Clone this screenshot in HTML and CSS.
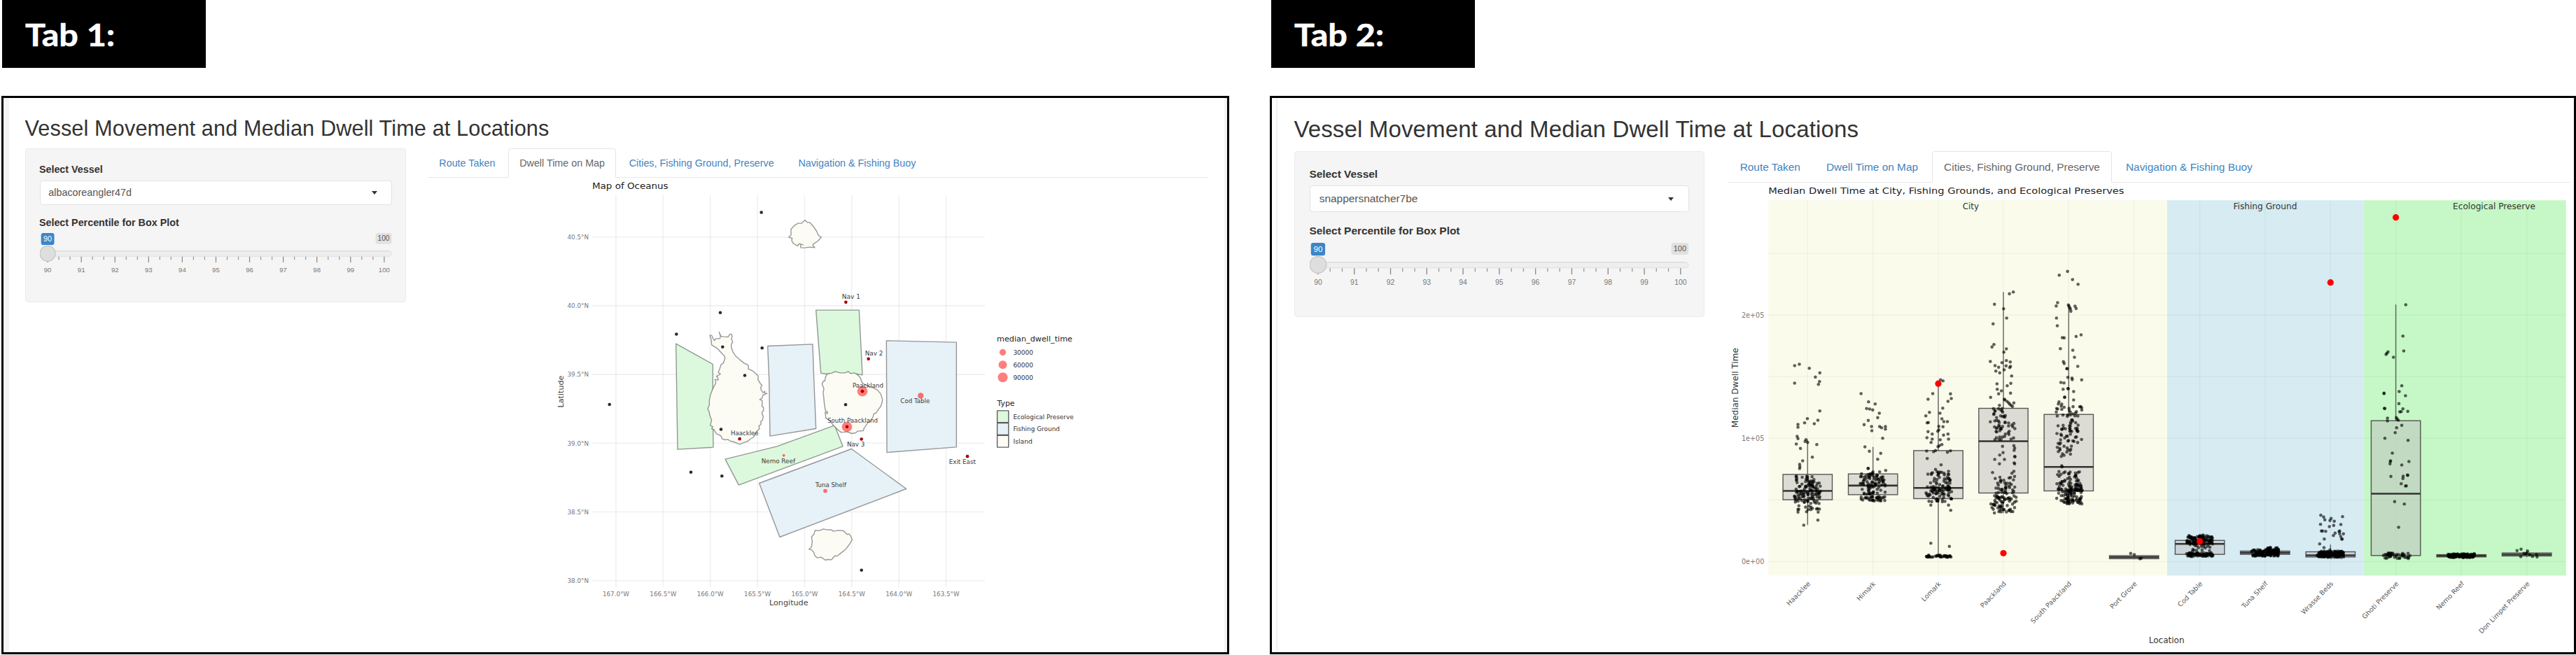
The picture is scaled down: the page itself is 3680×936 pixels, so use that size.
FILE: index.html
```html
<!DOCTYPE html>
<html lang="en">
<head>
<meta charset="utf-8">
<title>Vessel Movement and Median Dwell Time at Locations</title>
<link rel="stylesheet" href="styles.css">
</head>
<body>
<section class="column column-map">
  <h1 class="caption"><span>Tab 1:</span></h1>
  <div class="panel panel-map">
    <h2 class="title">Vessel Movement and Median Dwell Time at Locations</h2>
    <div class="layout">
      <aside class="well">
        <label class="label">Select Vessel</label>
        <div class="select"><span>albacoreangler47d</span><i class="caret"></i></div>
        <label class="label">Select Percentile for Box Plot</label>
        <svg class="slider" viewBox="0 0 491.5 62"></svg>
      </aside>
      <main class="main">
        <nav class="tabs">
          <a class="tab">Route Taken</a><a class="tab active">Dwell Time on Map</a><a class="tab">Cities, Fishing Ground, Preserve</a><a class="tab">Navigation &amp; Fishing Buoy</a>
        </nav>
        <svg class="chart" id="map" viewBox="611 253.5 1114 640" width="1114" height="640"></svg>
      </main>
    </div>
  </div>
</section>
<section class="column column-box">
  <h1 class="caption"><span>Tab 2:</span></h1>
  <div class="panel panel-box">
    <h2 class="title">Vessel Movement and Median Dwell Time at Locations</h2>
    <div class="layout">
      <aside class="well">
        <label class="label">Select Vessel</label>
        <div class="select"><span>snappersnatcher7be</span><i class="caret"></i></div>
        <label class="label">Select Percentile for Box Plot</label>
        <svg class="slider" viewBox="0 0 491.5 62"></svg>
      </aside>
      <main class="main">
        <nav class="tabs">
          <a class="tab">Route Taken</a><a class="tab">Dwell Time on Map</a><a class="tab active">Cities, Fishing Ground, Preserve</a><a class="tab">Navigation &amp; Fishing Buoy</a>
        </nav>
        <svg class="chart" id="boxplot" viewBox="2468 260.8 1204 665" width="1204" height="665"></svg>
      </main>
    </div>
  </div>
</section>
<script src="charts.js"></script>
</body>
</html>
```
FILE: styles.css
```css
* { box-sizing: border-box; }
body {
  margin: 0;
  width: 3680px;
  height: 936px;
  overflow: hidden;
  background: #fff;
  display: flex;
  font-family: "Liberation Sans", Arial, sans-serif;
  color: #333;
}
.column { display: flex; flex-direction: column; }
.column-map { width: 1754px; margin-left: 2px; margin-right: 58px; }
.column-box { width: 1866px; }
.caption {
  margin: 0 0 40px 1px;
  width: 291px;
  height: 97px;
  background: #000;
  color: #fff;
  padding-left: 33px;
  font: bold 44.5px/97px Lato, sans-serif;
}
.column-box .caption { margin-left: 2px; }
.caption span { display: inline-block; transform-origin: 0 50%; transform: scaleX(1.09); -webkit-text-stroke: .6px #fff; }
.panel {
  height: 798px;
  border: 3px solid #000;
}
.panel-map {
  font-size: 14.33px;
  padding: 26.5px 28px 0 31.4px;
  box-shadow: inset 8px 0 #f4f4f4, inset -4px 0 #f4f4f4;
}
.panel-box {
  font-size: 15.43px;
  padding: 27px 5px 0 32.4px;
  box-shadow: inset 6px 0 #fff, inset 8px 0 #f1f1f1;
}
.title {
  margin: 0 0 .37em -1px;
  font-size: 2.143em;
  font-weight: 400;
  line-height: 1.1;
  letter-spacing: .0035em;
  white-space: nowrap;
}
.layout { display: flex; align-items: flex-start; }
.well {
  flex: none;
  width: 37.95em;
  height: 15.36em;
  margin-right: 2.15em;
  padding: 1.36em;
  background: #f5f5f5;
  border: 1.5px solid #ebebeb;
  border-radius: .29em;
}
.label {
  display: block;
  font-weight: 700;
  line-height: 1.4286;
  margin-left: -1px;
  margin-bottom: .357em;
}
.select {
  display: flex;
  align-items: center;
  justify-content: space-between;
  height: 2.48em;
  margin-bottom: 1.02em;
  padding: 0 1.35em 0 .8em;
  background: #fff;
  border: 1.5px solid #e2e2e2;
  border-radius: .29em;
  color: #555;
}
.caret {
  border: .31em solid transparent;
  border-top: .36em solid #333;
  border-bottom: 0;
}
.slider { display: block; width: 100%; font-family: "Liberation Sans", Arial, sans-serif; }
.main { flex: 1; }
.tabs {
  display: flex;
  height: 2.94em;
  border-bottom: 1.5px solid #e8e8e8;
}
.tab {
  height: 2.94em;
  padding: .75em 1.07em 0;
  margin-right: 2px;
  line-height: 1.4286;
  border: 1.5px solid transparent;
  color: #4384bf;
  white-space: nowrap;
}
.tab.active {
  color: #666;
  background: #fff;
  border-color: #e4e4e4;
  border-bottom-color: #fff;
  border-radius: .29em .29em 0 0;
}
.chart { display: block; font-family: "DejaVu Sans", sans-serif; }
.grid { stroke: #000; stroke-opacity: .06; stroke-width: 1.6; }
.area { stroke: #555; stroke-opacity: .6; stroke-width: 1.4; stroke-linejoin: round; vector-effect: non-scaling-stroke; }
.preserve { fill: #ddf9dd; }
.ground { fill: #e6f2f8; }
.island { fill: #fcfcf5; }
.bubble { fill: #f00; fill-opacity: .5; }
.port { fill: #a80000; }
.buoy { fill: #2b2b2b; }
.box { fill: #bebebe; fill-opacity: .5; stroke: #333; stroke-opacity: .8; stroke-width: 1.4; }
.whisker { stroke: #333; stroke-opacity: .7; stroke-width: 1.5; }
.median { stroke: #333; stroke-width: 2.6; }
.point { fill: #000; fill-opacity: .62; }
.outlier { fill: #f00; }
```
FILE: charts.js
```javascript
const NS = 'http://www.w3.org/2000/svg';

function add(parent, tag, attrs, text) {
  const node = document.createElementNS(NS, tag);
  for (const key in attrs) node.setAttribute(key, attrs[key]);
  if (text !== undefined) node.textContent = text;
  parent.appendChild(node);
  return node;
}

// Text spanning x1..x2 on the given baseline.
function span(svg, text, x1, x2, y, size, fill) {
  return add(svg, 'text', { x: x1, y, 'font-size': size, fill, textLength: x2 - x1, lengthAdjust: 'spacingAndGlyphs' }, text);
}
function line(svg, cls, x1, y1, x2, y2) {
  add(svg, 'line', { class: cls, x1, y1, x2, y2 });
}
function dot(svg, cls, cx, cy, r) {
  add(svg, 'circle', { class: cls, cx, cy, r });
}

// Percentile sliders
document.querySelectorAll('.slider').forEach(svg => {
  add(svg, 'rect', { x: .5, y: 25, width: 490.5, height: 7.5, rx: 4, fill: '#eee', stroke: '#e0e0e0', 'stroke-width': 1 });
  line(svg, '', 4, 25.4, 488, 25.4);
  svg.lastChild.setAttribute('stroke', '#dcdcdc');
  for (let i = 0; i <= 30; i++) {
    const x = 10.8 + i * 47 / 3;
    const major = i % 3 === 0;
    add(svg, 'line', { x1: x, x2: x, y1: 33, y2: major ? 41 : 37.5, stroke: major ? '#888' : '#999', 'stroke-width': 1.2 });
    if (major) add(svg, 'text', { x, y: 54.3, 'font-size': 9.4, fill: '#777', 'text-anchor': 'middle' }, 90 + i / 3);
  }
  add(svg, 'circle', { cx: 10.8, cy: 28.6, r: 10.8, fill: '#dedede', stroke: '#c2c2c2' });
  add(svg, 'rect', { x: 1.6, y: 0, width: 18.4, height: 16.6, rx: 3, fill: '#3b86c8' });
  add(svg, 'text', { x: 10.8, y: 11.6, 'font-size': 10.5, fill: '#fff', 'text-anchor': 'middle' }, '90');
  add(svg, 'rect', { x: 468.8, y: 0, width: 22.4, height: 15.4, rx: 3, fill: '#e1e1e1' });
  add(svg, 'text', { x: 480, y: 11.2, 'font-size': 10, fill: '#555', 'text-anchor': 'middle' }, '100');
});

// Map of Oceanus
const map = document.getElementById('map');
span(map, 'Map of Oceanus', 846, 954.6, 269.3, 12.6, '#222');
['167.0', '166.5', '166.0', '165.5', '165.0', '164.5', '164.0', '163.5'].forEach((t, i) => {
  const x = 880 + i * 67.36;
  line(map, 'grid', x, 278, x, 839);
  span(map, t + '°W', x - 19, x + 19, 851.5, 8.9, '#777');
});
['40.5', '40.0', '39.5', '39.0', '38.5', '38.0'].forEach((t, i) => {
  const y = 338.2 + i * 98.2;
  line(map, 'grid', 846, y, 1407, y);
  span(map, t + '°N', 810.5, 841, y + 3.3, 8.9, '#777');
});
span(map, 'Longitude', 1099, 1154.6, 864.8, 11, '#444');
add(map, 'text', { x: 0, y: 0, transform: 'translate(805 559) rotate(-90)', 'font-size': 11, fill: '#444', 'text-anchor': 'middle', textLength: 46, lengthAdjust: 'spacingAndGlyphs' }, 'Latitude');

const southern = add(map, 'g', { transform: 'translate(780 640) scale(.35714 .33333)' });
const central = add(map, 'g', { transform: 'translate(900 400) scale(.33333)' });
const northern = add(map, 'g', { transform: 'translate(780 240) scale(.33333)' });
function area(g, type, points) { add(g, 'polygon', { class: 'area ' + type, points }); }
area(central, 'preserve', '197,272 355,360 355,560 357,716 204,725');
area(central, 'ground', '590,282 783,274 788,420 797,636 600,668 596,420');
area(central, 'preserve', '797,128 982,128 996,406 974,402 940,400 880,400 845,402 818,398');
area(central, 'ground', '1099,259 1399,266 1399,715 1101,738');
area(central, 'preserve', '408,767 630,712 877,622 912,712 466,878');
area(southern, 'ground', '853,150 1222,3 1441,174 935,381');
area(central, 'island', '342,236 350,236 356,250 362,258 368,250 385,250 388,240 382,222 390,240 400,242 420,243 428,232 434,230 438,240 435,252 440,265 434,275 434,285 440,305 452,324 470,340 490,356 500,360 508,366 507,380 525,388 545,406 550,414 548,425 560,445 566,450 560,460 562,470 570,482 578,476 578,484 588,485 570,492 566,505 556,512 566,515 567,530 565,540 572,545 572,560 566,565 566,575 571,582 568,600 561,605 561,618 552,625 555,636 540,652 530,672 515,681 505,690 490,695 470,703 445,693 432,690 420,683 405,684 395,680 390,668 380,662 370,658 360,640 350,636 355,628 344,622 350,600 342,580 340,565 333,552 340,535 340,515 345,490 355,465 368,440 364,425 378,428 376,416 370,412 388,402 378,395 385,378 390,362 400,355 407,335 405,325 395,315 375,293 350,277 348,255');
area(central, 'island', '845,402 865,398 880,391 900,397 922,397 935,391 945,400 960,397 972,403 985,415 990,425 995,440 1010,450 1040,460 1060,470 1075,488 1082,512 1080,525 1075,540 1060,560 1054,570 1045,572 1042,585 1030,605 1018,612 1010,625 1004,632 1000,645 975,647 968,654 950,657 935,651 925,650 905,652 890,640 870,620 855,600 840,592 836,565 846,572 846,563 838,560 834,540 832,520 828,480 831,465 823,445 829,432 835,432 838,415');
area(northern, 'island', '1110,222 1120,232 1130,232 1145,248 1160,270 1168,288 1180,295 1165,312 1145,325 1144,332 1152,340 1130,338 1108,341 1092,340 1090,325 1102,328 1085,323 1078,333 1060,322 1053,310 1055,300 1040,296 1050,286 1050,260 1065,245 1080,236 1095,236');
area(southern, 'island', '1076,352 1095,353 1110,346 1125,350 1140,349 1150,356 1170,352 1190,354 1205,370 1212,367 1218,375 1225,392 1215,410 1200,432 1185,445 1165,462 1155,462 1142,478 1125,477 1118,480 1100,467 1085,470 1075,460 1072,448 1063,436 1052,433 1062,424 1065,400 1062,380 1072,368');

[[1087.7, 303], [1029, 446.3], [966.3, 477], [1032.3, 495.3], [1088.7, 496.7], [1064, 536], [870.7, 577.5],
 [1208, 577.7], [1030, 613], [987, 674.3], [1031.3, 679.7], [1230.7, 814.3]].forEach(p => dot(map, 'buoy', p[0], p[1], 2.3));
[[996, 476, 22], [930, 628, 22], [1246, 495, 12.5], [659, 751, 6], [837, 903, 8.5]].forEach(p => dot(central, 'bubble', p[0], p[1], p[2]));
[[1246, 495, 11], [659, 751, 5], [837, 903, 7.5]].forEach(p => add(central, 'circle', { cx: p[0], cy: p[1], r: p[2], fill: '#f66', 'fill-opacity': .7 }));
[[925, 94], [1022, 337], [992, 681], [470, 680], [1446, 755], [996, 476], [930, 628]].forEach(p => dot(central, 'port', p[0], p[1], 7));
[['Nav 1', 908, 987, 80], ['Nav 2', 1007, 1084, 323], ['Nav 3', 930, 1006, 714], ['Paackland', 954, 1086, 462],
 ['South Paackland', 846, 1062, 612], ['Haacklee', 432, 551, 664], ['Cod Table', 1159, 1285, 528],
 ['Nemo Reef', 563, 708, 784], ['Exit East', 1367, 1482, 788], ['Tuna Shelf', 794, 927, 887]
].forEach(l => span(central, l[0], l[1], l[2], l[3], 27.5, '#3a3a3a'));

span(map, 'median_dwell_time', 1424, 1532, 487.3, 11, '#222');
[['30000', 503, 4.7], ['60000', 520.7, 6], ['90000', 538.7, 7]].forEach(l => {
  dot(map, 'bubble', 1432.5, l[1], l[2]);
  span(map, l[0], 1447.4, 1476, l[1] + 3.3, 8.9, '#333');
});
span(map, 'Type', 1424.5, 1449.5, 579, 11, '#222');
[['Ecological Preserve', 'preserve', 586, 1533.7], ['Fishing Ground', 'ground', 603.7, 1514], ['Island', 'island', 621.4, 1475]].forEach(l => {
  add(map, 'rect', { class: 'area ' + l[1], x: 1424.6, y: l[2] + .4, width: 16.2, height: 16.8, style: 'stroke-opacity:.95' });
  span(map, l[0], 1447.4, l[3], l[2] + 12.2, 8.9, '#333');
});

// Dwell time box plot
const plot = document.getElementById('boxplot');
span(plot, 'Median Dwell Time at City, Fishing Grounds, and Ecological Preserves', 2526.2, 3034.5, 277.3, 12.8, '#222');
[[2526.2, 3096, '#fafbeb'], [3096, 3376.3, '#d6ebf2'], [3376.3, 3665.7, '#c6f7c6']].forEach(b =>
  add(plot, 'rect', { x: b[0], y: 286, width: b[1] - b[0], height: 536.3, fill: b[2] }));
span(plot, 'City', 2803.8, 2827, 299.2, 11.5, '#333');
span(plot, 'Fishing Ground', 3190.4, 3281.5, 299.2, 11.5, '#333');
span(plot, 'Ecological Preserve', 3504, 3622, 299.2, 11.5, '#333');

const centres = [2582.3, 2675.7, 2769, 2862, 2955.3, 3048.7, 3142.6, 3235.8, 3329.3, 3422.6, 3516.3, 3609.7];
const names = ['Haacklee', 'Himark', 'Lomark', 'Paackland', 'South Paackland', 'Port Grove', 'Cod Table', 'Tuna Shelf', 'Wrasse Beds', 'Ghoti Preserve', 'Nemo Reef', 'Don Limpet Preserve'];
[362, 450, 538, 626, 714, 802.3].forEach((y, i) => {
  add(plot, 'line', { x1: 2526.2, x2: 3665.7, y1: y, y2: y, stroke: '#000', 'stroke-opacity': .035, 'stroke-width': 1.5 });
  if (i % 2) span(plot, ['2e+05', '1e+05', '0e+00'][(i - 1) / 2], 2488, 2520.3, y + 3.6, 9.6, '#777');
});
centres.forEach((x, i) => {
  add(plot, 'line', { x1: x, x2: x, y1: 286, y2: 822.3, stroke: '#000', 'stroke-opacity': .035, 'stroke-width': 1.5 });
  add(plot, 'text', { transform: `translate(${x + 4.5} 834.5) rotate(-46)`, 'font-size': 9.5, fill: '#5a5a5a', 'text-anchor': 'end' }, names[i]);
});
span(plot, 'Location', 3069.8, 3120.5, 918.7, 11.6, '#333');
add(plot, 'text', { transform: 'translate(2482.5 554) rotate(-90)', 'font-size': 11.6, fill: '#333', 'text-anchor': 'middle', textLength: 114, lengthAdjust: 'spacingAndGlyphs' }, 'Median Dwell Time');

// whisker top, box top, median, box bottom, whisker bottom
const boxes = [
  [628, 677.7, 701.3, 714, 750], [638.3, 677, 693.7, 706.7, 715], [548, 643.7, 697, 712.3, 795],
  [417, 583.3, 630.3, 704.3, 733], [435, 592, 667, 701.3, 720], [793, 793.8, 796, 798.2, 799],
  [766, 772, 777, 792, 795], [783, 787.3, 789.7, 792, 795], [778, 788.3, 793.3, 795.7, 797],
  [435, 601, 705.3, 793.7, 797], [791, 792.4, 794, 795.6, 797], [785, 790, 792.3, 794.3, 796]
];
boxes.forEach((b, i) => {
  const x = centres[i];
  line(plot, 'whisker', x, b[0], x, b[1]);
  line(plot, 'whisker', x, b[3], x, b[4]);
  add(plot, 'rect', { class: 'box', x: x - 35.2, y: b[1], width: 70.4, height: b[3] - b[1] });
  line(plot, 'median', x - 35.2, b[2], x + 35.2, b[2]);
});

const city = (x, y) => dot(plot, 'point', 2440 + x / 2.529, 540 + y / 3, 2.3);
const sea = (x, y) => dot(plot, 'point', 3040 + x / 2.447, 540 + y / 3, 2.3);
const scatter = (put, list) => { for (let i = 0; i < list.length; i += 2) put(list[i], list[i + 1]); };
let seed = 47;
const rand = () => (seed = (seed * 16807) % 2147483647) / 2147483647;
const cloud = (put, n, x1, x2, y1, y2) => { for (let i = 0; i < n; i++) put(x1 + rand() * (x2 - x1), y1 + rand() * (y2 - y1)); };

scatter(city, [313,-53,330,-59,366,-42,404,-22,388,-4,313,22,403,15,399,27,404,141,397,181,359,174,349,192,384,196,325,199,325,211,322,250,325,260,319,283,334,302,354,264,351,272,360,276,393,285,377,339,342,355,331,370,332,380,331,388,397,609,346,631,398,575,325,575,356,573,396,560]);
cloud(city, 30, 318, 385, 412, 470); cloud(city, 26, 345, 408, 440, 500); cloud(city, 52, 312, 408, 475, 530); cloud(city, 18, 313, 405, 530, 565);
scatter(city, [553,67,580,102,604,111,573,131,584,133,595,137,619,151,613,170,579,182,564,200,591,208,592,226,620,208,627,213,641,208,641,219,631,258,567,295,583,314,624,323,613,348,579,387,642,396,596,402,620,402,578,388]);
cloud(city, 68, 550, 642, 408, 478); cloud(city, 18, 552, 642, 478, 512); cloud(city, 30, 552, 640, 508, 528);
scatter(city, [840,8,849,12,812,67,876,68,795,91,879,88,867,100,848,129,800,147,787,162,838,151,845,175,792,192,796,191,852,187,865,187,834,207,849,209,834,222,795,230,810,240,830,228,851,245,867,240,791,256,810,262,839,265,869,262,806,276,836,290,831,294,845,285,790,313,815,316,822,311,865,318,876,312,792,345,842,372,822,392,832,405,853,408,869,400,805,708,872,722,877,567,869,545,805,545]);
cloud(city, 48, 786, 876, 400, 480); cloud(city, 56, 786, 880, 465, 532); cloud(city, 40, 788, 878, 760, 768);
scatter(city, [1103,-369,1089,-361,1035,-316,1068,-297,1079,-257,1030,-232,1033,-144,1026,-133,1078,-125,1069,-111,1020,-71,1078,-75,1092,-69,1062,-66,1037,-53,1050,-46,1077,-52,1093,-50,1090,-45,1040,-30,1054,-22,1070,-35,1097,-9,1044,25,1081,33,1094,23,1045,48,1060,55,1050,68,1093,65,1021,83,1071,91,1072,94,1080,100,1086,106,1090,112,1095,117,1100,122,1105,107,1053,117,1064,293,1066,320,1054,330,1036,349,1071,349,1053,368,1105,290,1108,300,1106,310,1108,336,1109,338,1106,364,1108,368,1028,405,1105,400,1098,408]);
cloud(city, 22, 1020, 1080, 130, 195); cloud(city, 32, 1028, 1110, 190, 275); cloud(city, 16, 1035, 1110, 412, 460); cloud(city, 22, 1035, 1112, 455, 500); cloud(city, 40, 1022, 1114, 505, 550); cloud(city, 20, 1022, 1110, 550, 580);
scatter(city, [1299,-457,1269,-441,1317,-422,1337,-402,1263,-323,1258,-309,1302,-313,1304,-308,1326,-308,1307,-301,1309,-296,1311,-286,1330,-298,1259,-257,1262,-224,1280,-173,1287,-172,1330,-178,1348,-185,1273,-126,1318,-119,1324,-89,1284,-70,1287,-62,1336,-50,1296,-40,1298,-40,1300,-3,1315,0,1316,7,1350,8,1275,19,1286,21,1283,48,1300,45,1302,46,1321,58,1288,83,1289,82,1321,94,1268,102,1278,376,1279,381,1268,401,1342,402]);
cloud(city, 26, 1256, 1352, 108, 165); cloud(city, 16, 1305, 1340, 175, 230); cloud(city, 32, 1258, 1350, 200, 300); cloud(city, 12, 1258, 1330, 290, 344); cloud(city, 48, 1258, 1352, 402, 485); cloud(city, 68, 1295, 1352, 450, 540); cloud(city, 28, 1256, 1320, 470, 542);
scatter(city, [1527,752,1540,757,1560,775,1565,773]);

cloud(sea, 110, 205, 296, 680, 714); cloud(sea, 10, 205, 294, 673, 682); cloud(sea, 14, 225, 292, 714, 745); cloud(sea, 70, 205, 298, 749, 765);
cloud(sea, 120, 432, 527, 736, 764); cloud(sea, 30, 485, 527, 727, 745);
scatter(sea, [674,588,684,596,688,608,710,602,706,611,721,614,750,594,673,627,704,637,719,632,744,628,676,656,680,656,691,657,738,658,740,656,724,665,740,668,753,668,718,675,744,680,747,691,749,690,686,690,670,711,685,727,706,737]);
cloud(sea, 110, 668, 755, 742, 769); cloud(sea, 30, 660, 755, 755, 769);
scatter(sea, [971,-314,961,-180,964,-116,909,-112,905,-106,902,-101,928,-89,957,33,948,58,895,65,895,67,970,76,947,110,896,130,898,131,961,132,950,145,955,144,978,143,907,172,907,184,938,170,941,176,945,181,957,203,939,213,934,234,898,258,979,267,924,322,918,355,917,358,916,368,982,358,957,373,919,422,977,416,978,417,962,421,961,431,955,453,973,462,970,463,932,530,966,540,946,640]);
cloud(sea, 44, 893, 986, 750, 774);
cloud(sea, 120, 1118, 1212, 754, 770);
scatter(sea, [1360,740,1374,734,1397,742,1384,752,1394,750,1390,754,1373,766,1404,757,1414,765,1430,767,1428,757]);

[[2769, 548], [2862, 790.3], [3142.6, 773.5], [3329.3, 403.5], [3422.6, 310.5]].forEach(p => dot(plot, 'outlier', p[0], p[1], 4.6));
```
